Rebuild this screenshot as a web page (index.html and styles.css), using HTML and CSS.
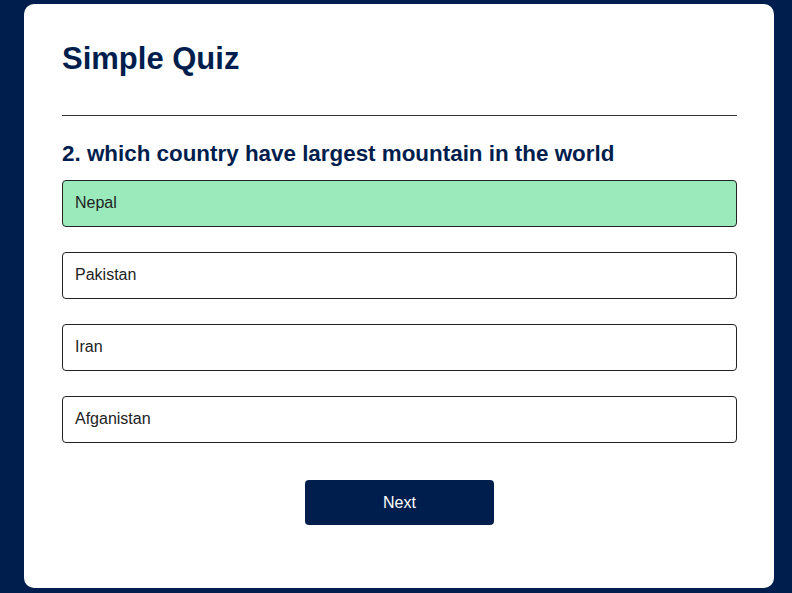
FILE: index.html
```html
<!DOCTYPE html>
<html lang="en">
<head>
<meta charset="utf-8">
<title>Simple Quiz</title>
<link rel="stylesheet" href="styles.css">
</head>
<body>
<div class="page">
  <div class="app">
    <h1 class="title">Simple Quiz</h1>
    <div class="quiz">
      <h2 class="question">2. which country have largest mountain in the world</h2>
      <div class="answers">
        <button class="btn correct">Nepal</button>
        <button class="btn">Pakistan</button>
        <button class="btn">Iran</button>
        <button class="btn">Afganistan</button>
      </div>
      <button class="next-btn">Next</button>
    </div>
  </div>
</div>
</body>
</html>
```
FILE: styles.css
```css
* { box-sizing: border-box; }
html, body { margin: 0; padding: 0; }
body {
  background: #001e4d;
  font-family: "Liberation Sans", Arial, sans-serif;
}
.page {
  padding: 4px 18px 5px 24px;
}
.app {
  background: #fff;
  border-radius: 10px;
  padding: 37px 37px 63px 38px;
}
.title {
  margin: 0;
  font-size: 31px;
  line-height: 36px;
  font-weight: 700;
  color: #001e4d;
  padding-bottom: 38px;
  border-bottom: 1px solid #333;
}
.quiz {
  display: flex;
  flex-direction: column;
}
.question {
  margin: 25px 0 13px;
  font-size: 22.4px;
  line-height: 26px;
  font-weight: 700;
  color: #001e4d;
}
.answers {
  display: flex;
  flex-direction: column;
  gap: 25px;
}
.btn {
  display: block;
  width: 100%;
  text-align: left;
  background: #fff;
  color: #222;
  font-family: "Liberation Sans", Arial, sans-serif;
  font-size: 16px;
  line-height: 19px;
  padding: 12px 12px 14px;
  border: 1px solid #222;
  border-radius: 4px;
  cursor: pointer;
}
.btn.correct {
  background: #9aeabc;
}
.next-btn {
  align-self: center;
  margin-top: 37px;
  width: 189px;
  height: 45px;
  padding: 1px 0 0;
  background: #001e4d;
  color: #fff;
  border: 0;
  border-radius: 4px;
  font-family: "Liberation Sans", Arial, sans-serif;
  font-size: 16px;
  cursor: pointer;
}
```
